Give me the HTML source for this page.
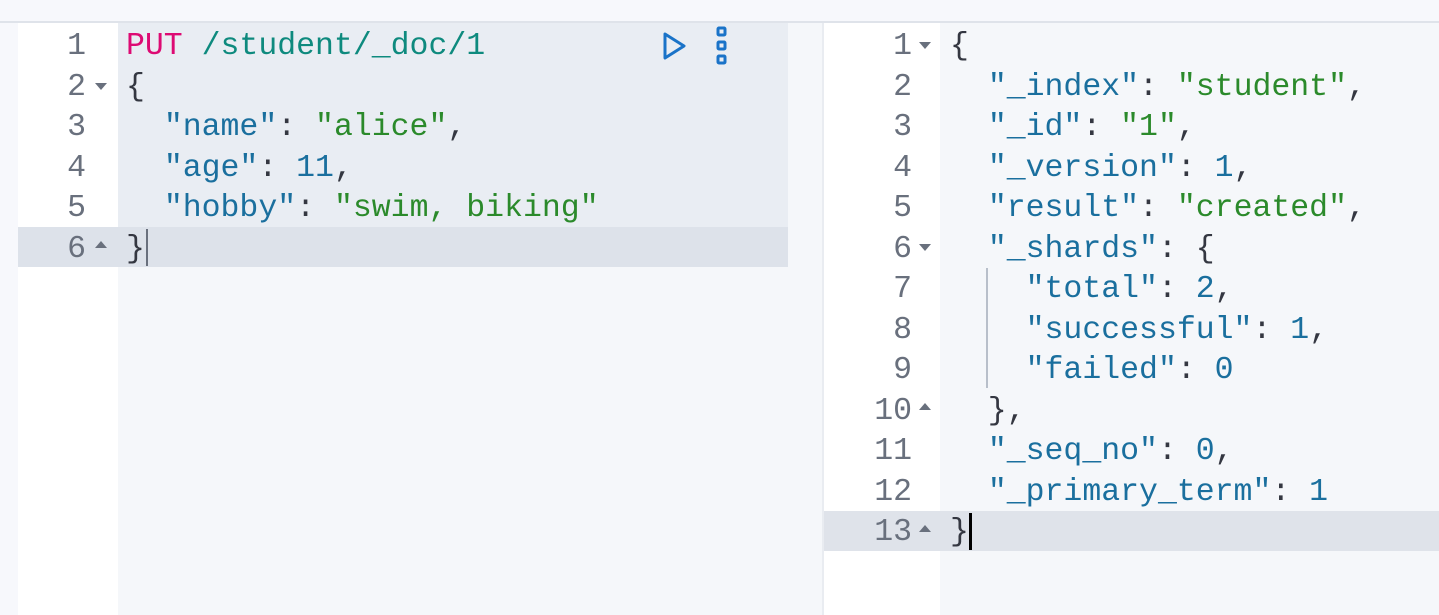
<!DOCTYPE html>
<html><head><meta charset="utf-8"><style>
*{margin:0;padding:0;box-sizing:border-box}
body{width:1439px;height:615px;overflow:hidden;background:#f7f8fc;position:relative;font-family:"Liberation Mono",monospace;font-size:31.5px}
.abs{position:absolute}
.ln{position:absolute;height:40.5px;line-height:40.5px;white-space:pre;margin-top:2px}
.num{color:#69707d;text-align:right}
.k{color:#1a6f9e}.s{color:#2b8a2b}.n{color:#1a6f9e}.p{color:#343741}.m{color:#dd0a73}.u{color:#0e8a7e}
.arr{position:absolute;width:0;height:0;border-left:6px solid transparent;border-right:6px solid transparent}
.dn{border-top:7px solid #69707d}.up{border-bottom:7px solid #69707d}
</style></head><body>
<div class="abs" style="left:0;top:21px;width:1439px;height:2px;background:#dfe3ea"></div>
<div class="abs" style="left:18px;top:23px;width:100px;height:592px;background:#fff"></div>
<div class="abs" style="left:118px;top:23px;width:670px;height:592px;background:#f5f7fa"></div>
<div class="abs" style="left:118px;top:23px;width:670px;height:205px;background:#e9edf3"></div>
<div class="abs" style="left:18px;top:227px;width:770px;height:40px;background:#dde2ea"></div>
<div class="abs" style="left:788px;top:23px;width:35px;height:592px;background:#f5f7fa"></div>
<div class="abs" style="left:822px;top:23px;width:2px;height:592px;background:#e9ecf1"></div>
<div class="abs" style="left:824px;top:23px;width:116px;height:592px;background:#fff"></div>
<div class="abs" style="left:940px;top:23px;width:499px;height:592px;background:#f5f7fa"></div>
<div class="abs" style="left:824px;top:511px;width:615px;height:40px;background:#dfe3ea"></div>

<div class="ln num" style="left:38px;width:48px;top:25px">1</div>
<div class="ln num" style="left:38px;width:48px;top:65.5px">2</div>
<div class="ln num" style="left:38px;width:48px;top:106px">3</div>
<div class="ln num" style="left:38px;width:48px;top:146.5px">4</div>
<div class="ln num" style="left:38px;width:48px;top:187px">5</div>
<div class="ln num" style="left:38px;width:48px;top:227.5px">6</div>
<div class="arr dn" style="left:95px;top:83px"></div>
<div class="arr up" style="left:95px;top:241px"></div>

<div class="ln" style="left:126px;top:25px"><span class="m">PUT</span> <span class="u">/student/_doc/1</span></div>
<div class="ln p" style="left:126px;top:65.5px">{</div>
<div class="ln" style="left:126px;top:106px">  <span class="k">"name"</span><span class="p">: </span><span class="s">"alice"</span><span class="p">,</span></div>
<div class="ln" style="left:126px;top:146.5px">  <span class="k">"age"</span><span class="p">: </span><span class="n">11</span><span class="p">,</span></div>
<div class="ln" style="left:126px;top:187px">  <span class="k">"hobby"</span><span class="p">: </span><span class="s">"swim, biking"</span></div>
<div class="ln p" style="left:126px;top:227.5px">}</div>
<div class="abs" style="left:146px;top:229px;width:2px;height:37px;background:#69707d"></div>

<svg class="abs" style="left:660px;top:30px" width="30" height="32" viewBox="0 0 30 32"><path d="M5 4 L24 16 L5 28 Z" fill="none" stroke="#1a73c8" stroke-width="3" stroke-linejoin="round"/></svg>
<svg class="abs" style="left:715px;top:26px" width="14" height="40" viewBox="0 0 14 40"><g fill="none" stroke="#1a73c8" stroke-width="3"><rect x="3" y="2" width="7" height="7" rx="1"/><rect x="3" y="16" width="7" height="7" rx="1"/><rect x="3" y="30" width="7" height="7" rx="1"/></g></svg>

<div class="ln num" style="left:850px;width:62px;top:25px">1</div>
<div class="ln num" style="left:850px;width:62px;top:65.5px">2</div>
<div class="ln num" style="left:850px;width:62px;top:106px">3</div>
<div class="ln num" style="left:850px;width:62px;top:146.5px">4</div>
<div class="ln num" style="left:850px;width:62px;top:187px">5</div>
<div class="ln num" style="left:850px;width:62px;top:227.5px">6</div>
<div class="ln num" style="left:850px;width:62px;top:268px">7</div>
<div class="ln num" style="left:850px;width:62px;top:308.5px">8</div>
<div class="ln num" style="left:850px;width:62px;top:349px">9</div>
<div class="ln num" style="left:850px;width:62px;top:389.5px">10</div>
<div class="ln num" style="left:850px;width:62px;top:430px">11</div>
<div class="ln num" style="left:850px;width:62px;top:470.5px">12</div>
<div class="ln num" style="left:850px;width:62px;top:511px">13</div>
<div class="arr dn" style="left:919px;top:42px"></div>
<div class="arr dn" style="left:919px;top:244px"></div>
<div class="arr up" style="left:919px;top:403px"></div>
<div class="arr up" style="left:919px;top:525px"></div>
<div class="abs" style="left:986px;top:268px;width:2px;height:120px;background:#b8bfca"></div>

<div class="ln p" style="left:950px;top:25px">{</div>
<div class="ln" style="left:950px;top:65.5px">  <span class="k">"_index"</span><span class="p">: </span><span class="s">"student"</span><span class="p">,</span></div>
<div class="ln" style="left:950px;top:106px">  <span class="k">"_id"</span><span class="p">: </span><span class="s">"1"</span><span class="p">,</span></div>
<div class="ln" style="left:950px;top:146.5px">  <span class="k">"_version"</span><span class="p">: </span><span class="n">1</span><span class="p">,</span></div>
<div class="ln" style="left:950px;top:187px">  <span class="k">"result"</span><span class="p">: </span><span class="s">"created"</span><span class="p">,</span></div>
<div class="ln" style="left:950px;top:227.5px">  <span class="k">"_shards"</span><span class="p">: {</span></div>
<div class="ln" style="left:950px;top:268px">    <span class="k">"total"</span><span class="p">: </span><span class="n">2</span><span class="p">,</span></div>
<div class="ln" style="left:950px;top:308.5px">    <span class="k">"successful"</span><span class="p">: </span><span class="n">1</span><span class="p">,</span></div>
<div class="ln" style="left:950px;top:349px">    <span class="k">"failed"</span><span class="p">: </span><span class="n">0</span></div>
<div class="ln p" style="left:950px;top:389.5px">  },</div>
<div class="ln" style="left:950px;top:430px">  <span class="k">"_seq_no"</span><span class="p">: </span><span class="n">0</span><span class="p">,</span></div>
<div class="ln" style="left:950px;top:470.5px">  <span class="k">"_primary_term"</span><span class="p">: </span><span class="n">1</span></div>
<div class="ln p" style="left:950px;top:511px">}</div>
<div class="abs" style="left:969px;top:513px;width:3px;height:37px;background:#000"></div>
</body></html>
